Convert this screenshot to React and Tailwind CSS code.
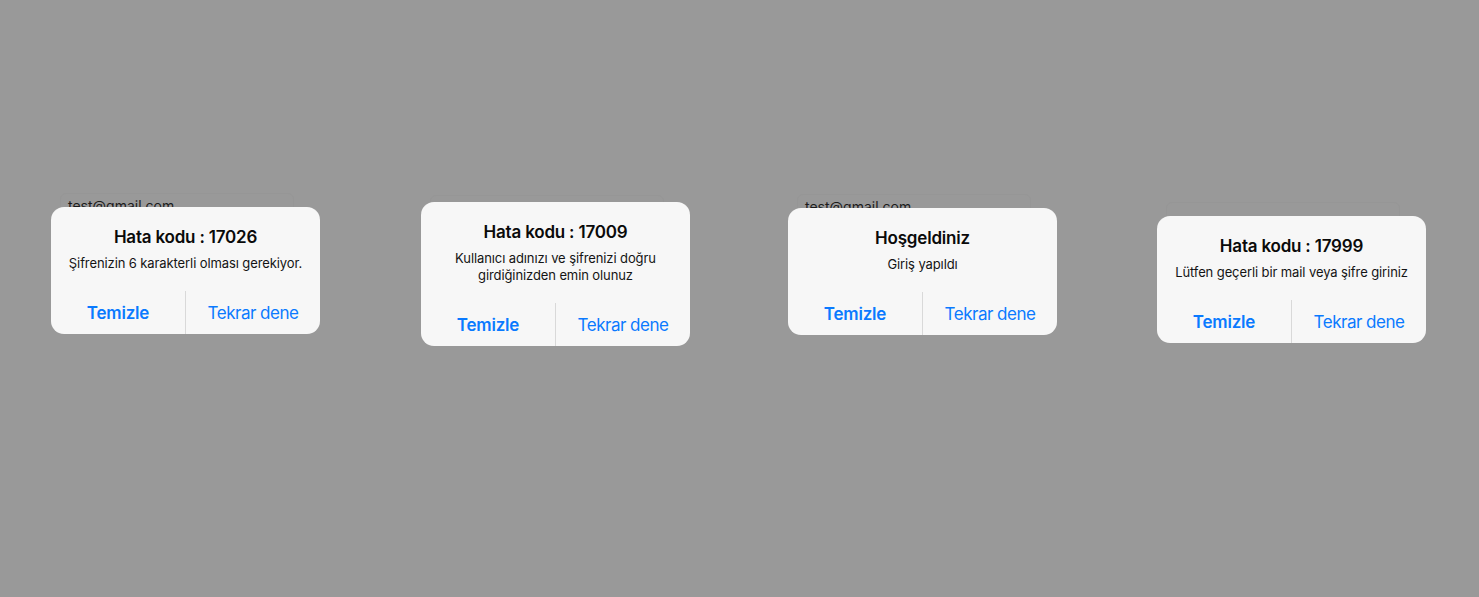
import React from "react";

const alerts = [
  {
    ml: "ml-[51px]",
    mt: "mt-[193px]",
    overlap: "-mt-[26px]",
    field: "test@gmail.com",
    title: "Hata kodu : 17026",
    lines: ["Şifrenizin 6 karakterli olması gerekiyor."],
  },
  {
    ml: "ml-[101px]",
    mt: "mt-[195px]",
    overlap: "-mt-[33px]",
    field: "",
    title: "Hata kodu : 17009",
    lines: ["Kullanıcı adınızı ve şifrenizi doğru", "girdiğinizden emin olunuz"],
  },
  {
    ml: "ml-[98px]",
    mt: "mt-[194px]",
    overlap: "-mt-[26px]",
    field: "test@gmail.com",
    title: "Hoşgeldiniz",
    lines: ["Giriş yapıldı"],
  },
  {
    ml: "ml-[100px]",
    mt: "mt-[202px]",
    overlap: "-mt-[26px]",
    field: "",
    title: "Hata kodu : 17999",
    lines: ["Lütfen geçerli bir mail veya şifre giriniz"],
  },
];

const Alert = ({ a }) => (
  <div className={`w-[269px] shrink-0 ${a.ml} ${a.mt}`}>
    {/* input behind the alert */}
    <div className="ml-[9px] w-[234px] h-[40px] rounded-[6px] border border-[#969696] pl-[7px] pt-[4px] text-[14px] leading-[16px] text-[#1c1c1c]">
      {a.field}
    </div>

    {/* alert card */}
    <div className={`relative ${a.overlap} rounded-[13px] bg-[#f7f7f7] overflow-hidden`}>
      <div className="px-4 pt-[19px] pb-[19px] text-center">
        <div className="text-[17px] leading-[22px] font-semibold text-[#0a0a0a] tracking-[-0.2px]">
          {a.title}
        </div>
        <div className="mt-[7px] text-[13px] leading-[17px] text-[#141414] tracking-[-0.1px]">
          {a.lines.map((l) => (
            <div key={l}>{l}</div>
          ))}
        </div>
      </div>
      <div className="flex h-[43px]">
        <button className="flex-1 flex items-center justify-center pt-[3px] text-[17px] font-semibold text-[#0a7aff] tracking-[-0.2px]">
          Temizle
        </button>
        <div className="w-px bg-[#d9d9d9]" />
        <button className="flex-1 flex items-center justify-center pt-[3px] text-[17px] text-[#0a7aff] tracking-[-0.5px]">
          Tekrar dene
        </button>
      </div>
    </div>
  </div>
);

export default function App() {
  return (
    <div
      className="w-full h-[597px] bg-[#999999] flex items-start overflow-hidden"
      style={{ fontFamily: "Inter, 'Noto Sans', sans-serif" }}
    >
      {alerts.map((a) => (
        <Alert key={a.title} a={a} />
      ))}
    </div>
  );
}
